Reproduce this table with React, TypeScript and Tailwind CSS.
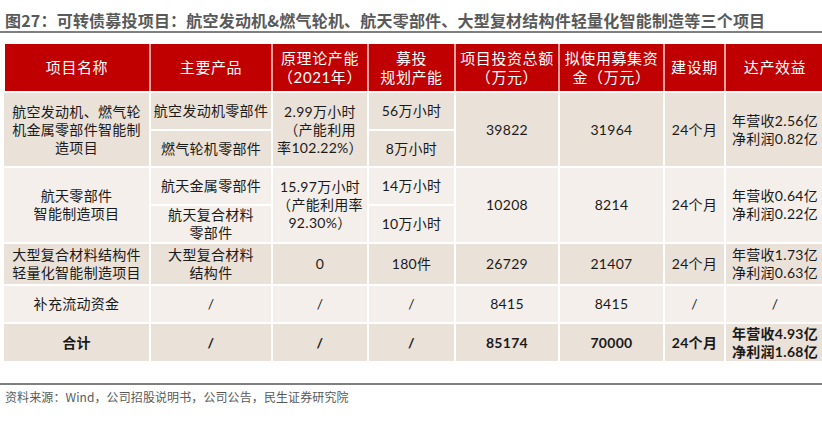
const font = "font-['Lato','Noto_Sans_CJK_SC',sans-serif]";

const head = "bg-[#c00000] text-white border-2 border-white border-l-[#e9a0a0] border-r-[#e9a0a0] text-center align-middle text-[15px] leading-[19px] tracking-[0.6px] font-normal";
const dark = "bg-[#eae1d8]";
const light = "bg-[#f4efea]";
const cell = "border-2 border-white text-center align-middle text-[14px] leading-[18px] tracking-[0.3px] text-[#1a1a1a]";

function Lines({ rows }: { rows: string[] }) {
  return (
    <>
      {rows.map((r, i) => (
        <div key={i}>{r}</div>
      ))}
    </>
  );
}

export default function App() {
  return (
    <div className={`w-[822px] h-[422px] bg-white overflow-hidden ${font}`}>
      <div className="pt-[9px] pl-[5px] text-[16px] leading-[22px] tracking-[0.2px] font-bold text-[#595959] whitespace-nowrap font-['Noto_Sans_CJK_SC',sans-serif]">
        图27：可转债募投项目：航空发动机&amp;燃气轮机、航天零部件、大型复材结构件轻量化智能制造等三个项目
      </div>
      <div className="h-[2px] bg-[#7f7f7f]" />

      <table className="mt-[11px] ml-[3px] w-[821px] table-fixed border-collapse">
        <colgroup>
          <col className="w-[146px]" />
          <col className="w-[122px]" />
          <col className="w-[96px]" />
          <col className="w-[87px]" />
          <col className="w-[104px]" />
          <col className="w-[105px]" />
          <col className="w-[61px]" />
          <col />
        </colgroup>
        <thead>
          <tr className="h-[48px]">
            <th className={`${head} border-t-0 border-l-white`}>项目名称</th>
            <th className={`${head} border-t-0`}>主要产品</th>
            <th className={`${head} border-t-0`}>
              <Lines rows={["原理论产能", "（2021年）"]} />
            </th>
            <th className={`${head} border-t-0`}>
              <Lines rows={["募投", "规划产能"]} />
            </th>
            <th className={`${head} border-t-0`}>
              <Lines rows={["项目投资总额", "（万元）"]} />
            </th>
            <th className={`${head} border-t-0`}>
              <Lines rows={["拟使用募集资", "金（万元）"]} />
            </th>
            <th className={`${head} border-t-0`}>建设期</th>
            <th className={`${head} border-t-0 border-r-0`}>达产效益</th>
          </tr>
        </thead>
        <tbody>
          <tr className="h-[38px]">
            <td rowSpan={2} className={`${cell} ${dark} border-l-0`}>
              <Lines rows={["航空发动机、燃气轮", "机金属零部件智能制", "造项目"]} />
            </td>
            <td className={`${cell} ${dark} tracking-[0.1px]`}>航空发动机零部件</td>
            <td rowSpan={2} className={`${cell} ${dark}`}>
              <Lines rows={["2.99万小时", "（产能利用", "率102.22%）"]} />
            </td>
            <td className={`${cell} ${dark}`}>56万小时</td>
            <td rowSpan={2} className={`${cell} ${dark}`}>39822</td>
            <td rowSpan={2} className={`${cell} ${dark}`}>31964</td>
            <td rowSpan={2} className={`${cell} ${dark}`}>24个月</td>
            <td rowSpan={2} className={`${cell} ${dark} border-r-0`}>
              <Lines rows={["年营收2.56亿", "净利润0.82亿"]} />
            </td>
          </tr>
          <tr className="h-[37px]">
            <td className={`${cell} ${dark}`}>燃气轮机零部件</td>
            <td className={`${cell} ${dark}`}>8万小时</td>
          </tr>

          <tr className="h-[38px]">
            <td rowSpan={2} className={`${cell} ${light} border-l-0`}>
              <Lines rows={["航天零部件", "智能制造项目"]} />
            </td>
            <td className={`${cell} ${light}`}>航天金属零部件</td>
            <td rowSpan={2} className={`${cell} ${light}`}>
              <Lines rows={["15.97万小时", "（产能利用率", "92.30%）"]} />
            </td>
            <td className={`${cell} ${light}`}>14万小时</td>
            <td rowSpan={2} className={`${cell} ${light}`}>10208</td>
            <td rowSpan={2} className={`${cell} ${light}`}>8214</td>
            <td rowSpan={2} className={`${cell} ${light}`}>24个月</td>
            <td rowSpan={2} className={`${cell} ${light} border-r-0`}>
              <Lines rows={["年营收0.64亿", "净利润0.22亿"]} />
            </td>
          </tr>
          <tr className="h-[38px]">
            <td className={`${cell} ${light}`}>
              <Lines rows={["航天复合材料", "零部件"]} />
            </td>
            <td className={`${cell} ${light}`}>10万小时</td>
          </tr>

          <tr className="h-[42px]">
            <td className={`${cell} ${dark} border-l-0`}>
              <Lines rows={["大型复合材料结构件", "轻量化智能制造项目"]} />
            </td>
            <td className={`${cell} ${dark}`}>
              <Lines rows={["大型复合材料", "结构件"]} />
            </td>
            <td className={`${cell} ${dark}`}>0</td>
            <td className={`${cell} ${dark}`}>180件</td>
            <td className={`${cell} ${dark}`}>26729</td>
            <td className={`${cell} ${dark}`}>21407</td>
            <td className={`${cell} ${dark}`}>24个月</td>
            <td className={`${cell} ${dark} border-r-0`}>
              <Lines rows={["年营收1.73亿", "净利润0.63亿"]} />
            </td>
          </tr>

          <tr className="h-[38px]">
            <td className={`${cell} ${light} border-l-0`}>补充流动资金</td>
            <td className={`${cell} ${light}`}>/</td>
            <td className={`${cell} ${light}`}>/</td>
            <td className={`${cell} ${light}`}>/</td>
            <td className={`${cell} ${light}`}>8415</td>
            <td className={`${cell} ${light}`}>8415</td>
            <td className={`${cell} ${light}`}>/</td>
            <td className={`${cell} ${light} border-r-0`}>/</td>
          </tr>

          <tr className="h-[38px] font-bold">
            <td className={`${cell} ${dark} border-l-0 border-b-0`}>合计</td>
            <td className={`${cell} ${dark} border-b-0`}>/</td>
            <td className={`${cell} ${dark} border-b-0`}>/</td>
            <td className={`${cell} ${dark} border-b-0`}>/</td>
            <td className={`${cell} ${dark} border-b-0`}>85174</td>
            <td className={`${cell} ${dark} border-b-0`}>70000</td>
            <td className={`${cell} ${dark} border-b-0`}>24个月</td>
            <td className={`${cell} ${dark} border-b-0 border-r-0`}>
              <Lines rows={["年营收4.93亿", "净利润1.68亿"]} />
            </td>
          </tr>
        </tbody>
      </table>

      <div className="mt-[22px] h-[2px] bg-[#7f7f7f]" />
      <div className="pt-[3px] pl-[5px] text-[12px] leading-[17px] tracking-[0.1px] text-[#595959] font-['Noto_Sans_CJK_SC',sans-serif]">
        资料来源：Wind，公司招股说明书，公司公告，民生证券研究院
      </div>
    </div>
  );
}
